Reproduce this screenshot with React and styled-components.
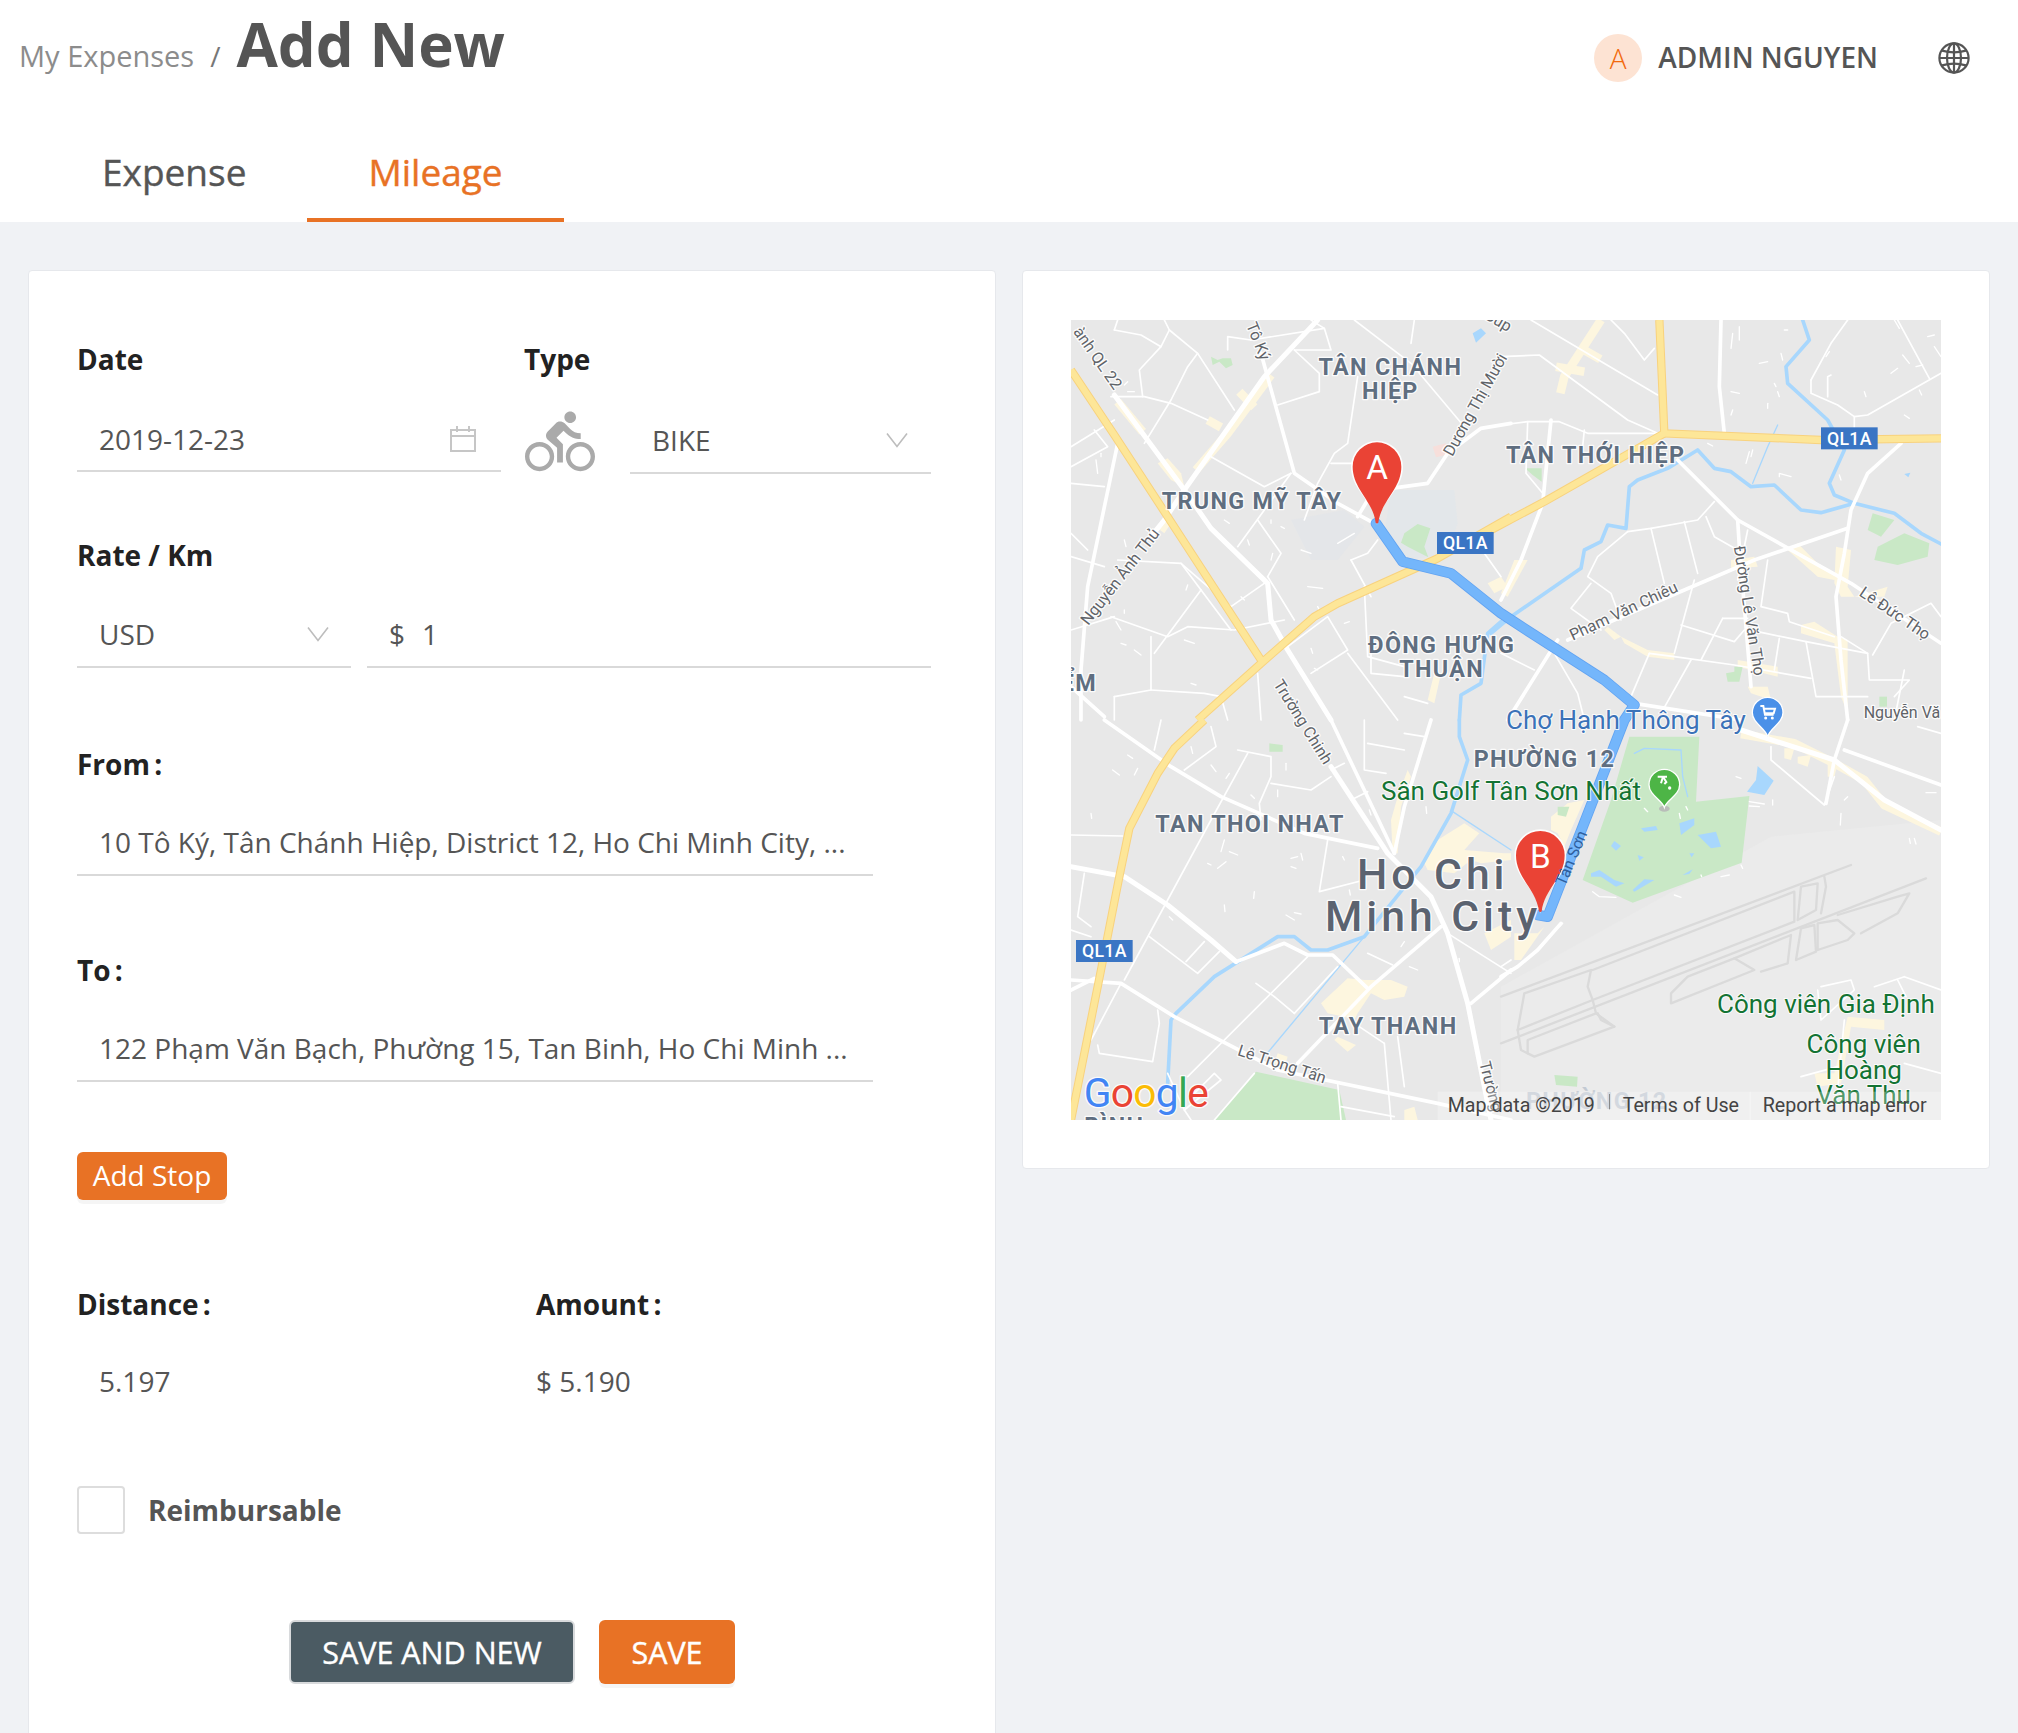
import React from "react";
import styled, { createGlobalStyle } from "styled-components";
import { MdDirectionsBike } from "react-icons/md";

const Global = createGlobalStyle`
  html, body { margin: 0; padding: 0; background: #f0f2f5; }
  * { box-sizing: border-box; }
`;
const Page = styled.div`
  height: 1733px; overflow: hidden; background: #f0f2f5;
  font-family: "Open Sans", "Noto Sans", sans-serif; color: #555;
`;
const Header = styled.header`background: #fff; height: 222px; display: flex; flex-direction: column;`;
const TopRow = styled.div`height: 120px; display: flex; justify-content: space-between; align-items: flex-start; padding: 0 48px 0 19px;`;
const Crumbs = styled.div`display: flex; align-items: baseline; padding-top: 1px;`;
const CrumbLink = styled.span`font-size: 29px; color: #8c8c8c;`;
const CrumbSep = styled.span`font-size: 28px; color: #777; margin: 0 16px;`;
const Title = styled.h1`margin: 0; font-size: 60px; font-weight: 700; color: #555; line-height: 87px;`;
const UserArea = styled.div`display: flex; align-items: center; padding-top: 34px;`;
const Avatar = styled.div`width: 48px; height: 48px; border-radius: 50%; background: #fde3d3; color: #f2690d; font-size: 28px; display: flex; align-items: center; justify-content: center; font-weight: 300;`;
const UserName = styled.div`font-size: 28px; font-weight: 600; margin: 0 60px 0 16px; color: #555; line-height: 46px; padding-bottom: 2px;`;
const Tabs = styled.nav`display: flex; margin-left: 41px; height: 102px;`;
const Tab = styled.div`
  padding: 27px 61px 0; font-size: 37px; line-height: 50px; height: 102px; -webkit-text-stroke: .4px currentColor;
  color: ${p => (p.$active ? "#e87225" : "#555")};
  border-bottom: 4px solid ${p => (p.$active ? "#e87225" : "transparent")};
`;
const Content = styled.main`display: grid; grid-template-columns: 968px 968px; gap: 26px; padding: 48px 28px 0; align-items: start;`;
const Card = styled.section`background: #fff; border: 1px solid #e6e8ec; border-radius: 4px;`;
const FormCard = styled(Card)`height: 1500px; padding: 68px 48px 0;`;
const MapCard = styled(Card)`padding: 48px; padding-top: 49px;`;
const Label = styled.div`font-size: 28px; font-weight: 700; color: #222; line-height: 40px; word-spacing: ${p => (p.$tight ? "-3px" : "0")};`;
const Row = styled.div`display: flex; align-items: flex-end; margin-top: ${p => p.$top || 0}px;`;
const Col = styled.div`width: ${p => p.$w}px; flex: none;`;
const Field = styled.div`
  width: ${p => p.$w}px; height: ${p => p.$h || 72}px; flex: none; display: flex; align-items: center;
  justify-content: ${p => (p.$start ? "flex-start" : "space-between")};
  border-bottom: 2px solid #d9d9d9; padding: ${p => p.$pt || 6}px ${p => p.$pr || 22}px 0 22px; font-size: 28px; color: #555; white-space: nowrap;
  margin-left: ${p => p.$ml || 0}px; margin-bottom: ${p => p.$mb || 0}px;
`;
const Prefix = styled.span`margin-right: 17px;`;
const BikeWrap = styled.div`width: 70px; height: 72px; margin-left: 24px; flex: none; color: #aaa; display: flex; align-items: flex-end; position: relative; top: 5px;`;
const Btn = styled.button`
  font-family: inherit; color: #fff; background: ${p => p.$dark ? "#4b5b63" : "#e87225"};
  border: ${p => p.$dark ? "2px solid #d8dadc" : "0"}; border-radius: 6px; padding: 0;
  box-shadow: ${p => p.$dark ? "none" : "0 4px 0 rgba(0,0,0,.04)"};
`;
const AddStop = styled(Btn)`width: 150px; height: 48px; font-size: 28px; margin-top: 70px; padding-bottom: 2px; display: block;`;
const ValueRow = styled.div`display: flex; margin-top: 37px;`;
const Value = styled.div`font-size: 28px; line-height: 40px; padding-left: ${p => p.$pl || 0}px; color: #555;`;
const CheckRow = styled.div`display: flex; align-items: center; margin-top: 85px;`;
const Check = styled.div`width: 48px; height: 48px; border: 2px solid #ddd; border-radius: 4px; background: #fff;`;
const CheckLabel = styled.div`font-size: 28px; font-weight: 700; color: #555; margin-left: 23px;`;
const Actions = styled.div`display: flex; justify-content: center; gap: 24px; margin-top: 86px;`;
const BigBtn = styled(Btn)`height: 64px; font-size: 30.5px; -webkit-text-stroke: .4px #fff; width: ${p => p.$w}px;`;
const MapBox = styled.div`width: 870px; height: 800px; overflow: hidden; background: #e8e8e8;`;
const MapSvg = styled.svg`display: block; width: 870px; height: 800px;`;
const MapText = styled.text`
  font-family: Roboto, "Noto Sans", sans-serif; paint-order: stroke; stroke-linejoin: round;
  stroke: rgba(255,255,255,.85);
`;
const AreaText = styled(MapText)`font-size: ${p => p.$s || 70}px; font-weight: ${p => p.$wt || 700}; fill: ${p => p.$c || "#5f6e80"}; letter-spacing: ${p => p.$ls || 4}px; stroke-width: 8px;`;
const RoadText = styled(MapText)`font-size: 48px; fill: ${p => p.$c || "#5f6368"}; stroke-width: 8px;`;
const PoiText = styled(MapText)`font-size: 78px; fill: ${p => p.$c || "#137333"}; stroke-width: 6px;`;
const AttrText = styled(MapText)`font-size: 59px; fill: #444; stroke: none;`;
const ShieldText = styled(MapText)`font-size: 53px; font-weight: 500; fill: #fff; stroke: none; letter-spacing: 1px;`;
const PinText = styled(MapText)`font-size: 100px; fill: #fff; stroke: none; text-anchor: middle;`;
const LogoText = styled(MapText)`font-size: 122px; stroke-width: 8px; letter-spacing: -2px;`;

const OFF = { a: [0, 0], b: [1290, 0], c: [0, 1200], d: [1290, 1200] };
const Lines = ({ data, w, color, cap = "round" }) => (
  <g fill="none" stroke={color} strokeWidth={w} strokeLinejoin="round" strokeLinecap={cap}>
    {Object.entries(data).map(([k, list]) => (
      <g key={k} transform={`translate(${OFF[k][0]} ${OFF[k][1]})`}>
        {list.map((pts, i) => <polyline key={i} points={pts} />)}
      </g>
    ))}
  </g>
);
const Polys = ({ data, color }) => (
  <g fill={color}>
    {Object.entries(data).map(([k, list]) => (
      <g key={k} transform={`translate(${OFF[k][0]} ${OFF[k][1]})`}>
        {list.map((pts, i) => <polygon key={i} points={pts} />)}
      </g>
    ))}
  </g>
);

const urban = {
  a: ["260,430 290,415 330,460 340,500 300,480", "270,600 300,610 280,640 260,625", "1250,790 1290,770 1310,800 1270,820", "1070,1140 1090,1060 1110,1060 1090,1150"],
  b: ["690,720 760,710 770,740 690,745", "1005,680 1050,690 1040,800 1060,830 1160,800 1150,830 1020,830 1000,790", "860,690 890,670 960,740 1010,770 1000,780 950,770", "900,915 940,905 1010,950 1040,960 1040,1180 1020,1130 1000,970 900,940", "360,950 440,990 520,1000 520,1020 440,1010 370,970", "320,920 360,950 340,960 310,930", "710,1020 830,1040 830,1070 710,1040", "740,1100 800,1100 810,1140 750,1120", "40,720 80,720 20,830 0,820"],
  c: ["1100,360 1180,310 1225,340 1180,390 1300,400 1320,400 1320,420 1230,430 1200,420 1150,460 1070,450 1060,430", "750,850 830,775 880,780 960,780 1010,800 1000,830 940,840 900,820 860,880 850,900 820,890 770,880", "800,950 855,975 830,995 790,960", "960,300 980,230 1010,150 1020,170 990,260 980,400 965,400", "1240,640 1320,600 1320,650 1260,690", "620,1000 650,1010 640,1040 610,1030", "1000,1170 1030,1160 1040,1200 1000,1200"],
  d: ["980,130 1010,130 1000,170 980,170", "150,290 200,250 250,240 210,330 190,380 170,340 150,330", "40,640 110,640 130,620 60,720 40,720", "940,1060 1000,1060 1040,890 1150,900 1150,930 1050,920 1020,1090 950,1100", "890,110 930,105 920,140 890,130", "850,85 880,85 870,120 850,115"],
};
const urbanLines = {
  a: ["600,165 470,340 375,450", "410,300 450,322", "505,215 550,262", "140,245 215,335"],
  b: ["300,0 190,170 178,220", "165,140 250,155", "240,85 298,118"],
  c: [],
  d: ["720,42 880,70 1000,130 1090,180 1150,255 1320,335"],
};
const parks = {
  a: ["420,110 440,120 455,115 480,115 485,135 465,145 445,125 425,135", "1000,640 1040,612 1078,625 1060,680 1072,712 1010,680 990,668"],
  b: ["72,445 122,445 122,485 95,465", "1115,580 1180,600 1140,650 1100,630", "1130,680 1210,640 1285,670 1280,710 1190,735 1120,720", "675,1060 700,1055 700,1040 725,1040 715,1085 680,1085", "1135,1130 1158,1130 1158,1160 1135,1160"],
  c: ["555,1055 805,1110 825,1200 430,1200", "595,70 635,75 635,95 595,95"],
  d: ["385,50 595,50 585,245 745,228 722,428 395,548 245,480 330,240", "160,1065 230,1070 228,1100 165,1095", "170,260 205,260 195,290 170,285"],
};
const ponds = {
  a: ["1205,40 1230,25 1245,40 1215,68"],
  b: ["1210,462 1228,458 1222,472"],
  d: ["770,138 818,182 790,225 738,215 765,180", "340,363 360,378 345,392 330,378", "590,345 645,335 660,380 630,385", "420,325 465,318 470,330 430,335", "535,310 580,295 580,315 540,345", "410,405 428,412 415,422", "270,460 295,450 340,480 370,490 345,500 300,470 270,470", "395,510 430,478 460,480 400,515", "545,465 575,448 565,462", "565,400 580,400 572,412"],
};
const rivers = {
  a: ["1290,905 1250,940 1230,1090 1170,1125 1165,1200"],
  b: ["905,0 925,60 855,140 860,190 980,300 1030,390 985,490 1000,525 1060,550 1180,580 1260,640 1320,672", "-30,940 30,890 160,800 240,745 250,690 300,665 320,615 375,625 385,500 410,480 500,445 590,390 640,445 690,455 750,500 820,495 900,570 960,578 1060,550"],
  c: ["1165,0 1165,50 1190,120 1140,280 1050,440 880,650 770,690 720,690 670,650 620,650 430,770 315,880 300,900 290,1090"],
  d: [],
};
const riverThin = {
  a: [],
  b: ["830,315 800,380 755,490"],
  c: ["880,650 580,1010", "1145,275 1320,390"],
  d: ["0,190 10,220", "400,100 430,85 540,90 545,170 560,230"],
};
const thin = {
  a: ["130,30 210,45 270,80 295,30", "270,80 205,150 215,230", "295,30 380,100 490,270", "380,100 350,140 300,240 220,370", "120,230 220,230 300,250 410,300", "0,380 130,300", "70,330 110,380 0,440", "0,490 100,500", "540,60 760,25 780,90 670,90", "670,90 745,160 745,215 620,255", "470,90 470,50 540,60", "760,25 720,0", "850,0 1020,130 1180,320", "1020,70 1030,0", "860,170 830,370 790,400 740,490 700,600", "780,430 850,430", "420,410 580,500 660,460", "660,460 500,680", "560,600 630,700 590,770", "590,770 670,900", "140,720 330,730 480,930", "330,730 480,860 580,790", "390,810 250,1000", "120,890 290,950 350,920 490,930 640,900", "240,950 240,1110 130,1130", "0,930 130,890", "840,720 890,700 920,660", "840,720 900,830", "880,800 890,1010 1000,1040", "650,980 770,890 830,990 720,1060", "900,1000 900,1060 1000,1070", "830,1000 980,1200", "560,1060 570,1200", "0,640 50,690", "0,710 100,740", "1000,1130 1070,1150", "240,1110 400,1120 450,1130 470,1200", "130,1200 130,1130", "1240,700 1290,770", "140,0 130,30", "280,0 295,30"],
  b: ["90,0 470,225", "0,110 115,105 380,300 470,340", "330,0 370,40 430,120 460,85", "0,315 80,305 175,305 260,340 470,340", "80,305 75,460 125,520", "250,330 240,430", "380,635 450,625 590,600 640,545", "615,590 640,650 710,690", "380,635 290,710 260,770 330,820 360,900", "270,790 210,865 300,930", "450,625 490,790", "550,605 590,760", "580,780 520,1000", "445,1000 520,1010 700,1035 930,1075", "540,915 700,965 730,930", "665,895 600,1020", "665,895 740,895", "570,1020 480,1180", "445,1000 390,1130", "740,630 710,780", "800,720 780,860 860,880 865,905 1000,950", "770,935 915,965 945,1130 1100,1130", "915,965 1100,1000 1105,1080 1225,1080 1180,1130", "835,955 820,1050", "1115,1005 1170,910 1290,850 1320,890", "1020,950 1100,1000", "930,180 990,70 1040,0", "930,180 930,220 1010,255 1060,290 1100,285 1320,160", "1190,0 1285,175", "1060,290 1060,340", "980,230 980,170 990,165", "160,1000 230,1120 250,1200", "0,1000 100,1050", "1210,1050 1180,1200"],
  c: ["530,100 420,300 160,780", "500,90 600,110 600,170 565,250 570,300", "600,190 720,210 780,170", "420,20 435,80 340,150", "770,360 745,515 880,480", "235,650 380,760 445,695", "345,725 400,665", "710,710 350,1070", "610,830 670,880", "610,830 555,790", "670,880 800,740", "260,870 265,910 245,1025 85,1000 80,975", "890,700 965,735", "1130,640 1320,760", "940,970 960,1200", "980,950 1000,1100", "800,1090 810,1200", "810,1160 970,1190", "550,1060 430,1200", "940,970 850,910", "0,345 155,348", "40,460 20,590 60,620", "0,630 60,650", "150,790 60,960", "290,1060 340,1170 360,1200", "340,1170 450,1080 430,1060 370,1120", "270,0 250,90", "840,240 890,215", "820,130 780,150", "880,0 880,150 945,160", "890,70 1000,90", "1000,40 1060,50"],
  d: ["810,80 810,120 970,255 1000,170", "960,800 1050,780 1060,810 960,900 950,810", "1210,770 1120,800", "1210,770 1320,810", "900,1070 1010,1040", "1030,900 1010,1110", "1210,1030 1320,1060", "1190,780 1215,830", "1320,40 1250,20", "0,740 30,720"],
};
const mid = {
  a: ["570,100 670,460 800,550 910,610", "140,370 50,800 30,1050 30,1200", "1320,310 1230,325 1130,400 1070,490 960,505", "890,540 860,590", "0,1100 100,1190"],
  b: ["660,0 655,200 670,340", "530,420 710,600 1050,790 1320,970", "200,960 760,720 1040,625", "1200,370 1100,460 1050,570 1030,700 1005,830 1020,1020 1040,1200", "710,600 715,680 750,1100", "150,300 125,550 60,720 0,840", "20,1200 170,960", "400,1150 720,1200"],
  c: ["100,0 300,140 450,230 700,340 920,385", "780,0 970,400", "495,725 640,670 710,705 785,705 890,805", "1110,620 900,800 680,1030", "0,780 150,790 310,890 620,1050 1100,1150 1320,1200", "1080,0 1000,260 970,400", "1320,750 1200,850", "0,810 70,775"],
  d: ["1030,90 1320,195", "1040,0 1000,120 975,250", "180,610 110,690 50,740 0,770"],
};
const major = {
  a: ["130,225 340,510 420,625 590,790 600,900 650,990 780,1200", "740,0 580,170 340,510 280,600 240,650"],
  b: [],
  c: ["780,140 950,400 1080,530 1130,640 1190,850 1260,1200", "0,440 160,470 290,555 420,660 495,725"],
  d: ["720,30 1000,120 1150,240 1320,330"],
};
const highway = {
  a: ["0,150 130,345 290,590 570,1020", "380,1200 570,1030 730,890 800,850 1100,715 1320,590"],
  b: ["-30,630 130,545 490,340", "475,0 490,340 960,360 1320,355"],
  c: ["400,0 310,85 260,160 175,325 145,470 90,750 50,950 0,1200"],
  d: [],
};
const runways = {
  d: ["0,830 1050,435", "0,970 1275,475", "50,930 70,820 270,750 260,800 275,840 50,930", "80,1000 100,1010 340,920 285,880 80,960 80,1000", "285,880 275,840 880,605 880,515 275,750", "510,850 760,750 700,715 560,770 510,820 510,850", "700,715 870,645 860,730 780,755", "890,600 900,500 950,490 945,570 890,600", "885,720 900,625 940,615 945,695 885,720", "950,690 950,610 1010,600 1060,640 1040,660 950,690", "960,580 975,500 970,470", "1010,585 1190,530 1225,520 1190,580 1080,640", "290,880 300,900 340,920", "50,930 60,990 80,1000"],
};
const dashes = {
  a: ["160,195 170,185", "170,215 190,215", "75,420 80,460", "90,400 90,410", "160,660 165,680", "135,905 150,930", "340,960 370,970", "710,800 755,805", "800,670 850,640", "690,690 720,700", "510,830 520,840", "600,600 600,610", "630,620 640,625", "530,660 535,675", "460,600 475,610", "150,970 165,975", "160,870 160,880", "350,795 345,810", "190,990 210,1005", "360,1090 375,1095", "740,860 745,870", "820,910 835,905", "720,985 725,1000", "600,720 605,700", "740,1050 730,1045"],
  b: ["695,40 690,85", "715,20 715,60", "775,130 800,125", "690,215 715,220", "820,190 825,200", "830,215 835,230", "840,100 845,120", "800,250 800,265", "695,270 690,285", "1170,160 1190,145", "1205,105 1225,130", "1300,80 1320,110", "1280,50 1300,45", "620,370 635,378", "745,395 735,430", "755,390 750,410", "835,470 835,460 870,470", "1015,465 1020,480", "1090,215 1095,230", "1210,285 1225,295", "985,95 975,110", "850,30 860,30", "1180,0 1195,25", "1245,140 1265,135", "1255,210 1262,225"],
  c: ["60,280 62,295", "170,105 185,115", "125,150 145,165", "190,165 200,145", "360,80 365,100", "420,135 435,155", "475,160 465,175", "540,225 550,235", "620,210 620,230", "645,130 645,150", "450,395 460,360", "475,395 500,405", "410,430 420,435", "440,445 465,425", "660,415 680,410", "660,440 675,445", "690,400 695,420", "550,515 548,535", "460,555 462,575", "645,585 670,600", "670,578 690,582", "815,410 820,420", "835,510 838,525", "295,590 305,600", "895,270 900,285", "1065,260 1067,280", "1000,665 990,680", "1015,740 1040,750", "1165,715 1165,725"],
  d: ["705,170 720,175", "430,265 440,275", "535,280 538,295", "555,260 560,270", "275,515 295,530 345,532", "520,525 540,532", "600,465 602,470", "660,470 685,465", "720,435 725,445", "745,245 790,252", "745,258 775,260", "815,240 815,255", "1020,280 1018,315", "1030,240 1040,230", "1225,355 1228,370", "1240,355 1245,372", "1275,218 1305,218", "175,620 185,610"],
};
const ROUTE = "915,610 995,725 1140,760 1290,880 1390,945 1600,1080 1690,1155 1660,1200 1430,1790 1400,1785";

const Pin = ({ x, y, fill = "#ea4335", letter }) => (
  <g transform={`translate(${x} ${y})`}>
    <path d="M0,3 C-8,-70 -78,-100 -78,-172 A78,78 0 1 1 78,-172 C78,-100 8,-70 0,3Z" fill="#fff" opacity=".9" />
    <path d="M-4,-4 C-12,-70 -73,-105 -73,-172 A73,73 0 1 1 73,-172 C73,-105 12,-70 4,-4 C3,-1 -3,-1 -4,-4Z" fill={fill} />
    <PinText x="0" y="-135">{letter}</PinText>
  </g>
);
const Shield = ({ x, y }) => (
  <g>
    <rect x={x} y={y} width="170" height="66" fill="#3a75c4" />
    <ShieldText x={x + 85} y={y + 52} textAnchor="middle">QL1A</ShieldText>
  </g>
);
const Angled = ({ x, y, r, children, c, $bare }) => (
  <RoadText $c={c} style={$bare ? { stroke: "none" } : undefined} transform={`translate(${x} ${y}) rotate(${r})`}>{children}</RoadText>
);

const CityMap = () => (
  <MapSvg viewBox="0 0 2610 2400">
    <rect x="0" y="0" width="2610" height="2400" fill="#e8e8e8" />
    <polygon points="1290,2000 2100,1550 2610,1500 2610,2400 1290,2400" fill="#ebebeb" />
    <Polys data={urban} color="#fdf6df" />
    <Lines data={urbanLines} w={26} color="#fdf6df" cap="butt" />
    <polygon points="960,510 1150,510 1160,610 1130,700 1010,720 940,640" fill="#e3e7ea" />
    <polygon points="660,600 820,570 880,620 800,720 720,720" fill="#e4e6e9" />
    <Polys data={parks} color="#c9e8c6" />
    <polygon points="1085,380 1125,370 1125,405 1095,412" fill="#f7dfdb" />
    <Polys data={ponds} color="#a8d7fd" />
    <Lines data={riverThin} w={4} color="#a8d7fd" />
    <Lines data={rivers} w={11} color="#a8d7fd" />
    <Lines data={runways} w={7} color="#dadada" />
    <Lines data={dashes} w={4} color="#fff" />
    <Lines data={thin} w={5} color="#fff" />
    <Lines data={mid} w={11} color="#fff" />
    <Lines data={major} w={15} color="#fff" />
    <Lines data={highway} w={25} color="#f8d27e" cap="butt" />
    <Lines data={highway} w={19} color="#fde698" cap="butt" />
    <polyline points={ROUTE} fill="none" stroke="#5a9ff2" strokeWidth="32" strokeLinejoin="round" strokeLinecap="round" opacity=".95" />
    <polyline points={ROUTE} fill="none" stroke="#74b6fb" strokeWidth="27" strokeLinejoin="round" strokeLinecap="round" />

    <AreaText x="958" y="165" textAnchor="middle">TÂN CHÁNH</AreaText>
    <AreaText x="958" y="238" textAnchor="middle">HIỆP</AreaText>
    <AreaText x="272" y="567">TRUNG MỸ TÂY</AreaText>
    <AreaText x="1305" y="430">TÂN THỚI HIỆP</AreaText>
    <AreaText x="1112" y="998" textAnchor="middle">ĐÔNG HƯNG</AreaText>
    <AreaText x="1112" y="1070" textAnchor="middle">THUẬN</AreaText>
    <AreaText x="78" y="1112" textAnchor="end">ỂM</AreaText>
    <AreaText x="253" y="1537">TAN THOI NHAT</AreaText>
    <AreaText x="743" y="2142">TAY THANH</AreaText>
    <AreaText x="1208" y="1340">PHƯỜNG 12</AreaText>
    <AreaText x="1365" y="2368" $c="#c3cad3" style={{ stroke: "none" }}>PHƯỜNG 12</AreaText>
    <AreaText x="40" y="2442">BÌNH</AreaText>

    <Angled x="5" y="35" r="55">ành QL 22</Angled>
    <Angled x="525" y="15" r="68">Tô Ký</Angled>
    <Angled x="1144" y="412" r="-61">Dương Thị Mười</Angled>
    <Angled x="1238" y="-5" r="30">Búp</Angled>
    <Angled x="52" y="918" r="-52">Nguyễn Ảnh Thủ</Angled>
    <Angled x="1988" y="680" r="81">Đường Lê Văn Thọ</Angled>
    <Angled x="1505" y="962" r="-25">Phạm Văn Chiêu</Angled>
    <Angled x="2362" y="825" r="34">Lê Đức Thọ</Angled>
    <RoadText x="2378" y="1195">Nguyễn Vă</RoadText>
    <Angled x="606" y="1092" r="58">Trường Chinh</Angled>
    <Angled x="497" y="2205" r="18">Lê Trọng Tấn</Angled>
    <Angled x="1225" y="2228" r="76">Trường</Angled>

    <PoiText x="1305" y="1228" $c="#3b72b8">Chợ Hạnh Thông Tây</PoiText>
    <PoiText x="930" y="1440">Sân Golf Tân Sơn Nhất</PoiText>
    <PoiText x="1938" y="2080">Công viên Gia Định</PoiText>
    <PoiText x="2378" y="2200" textAnchor="middle">Công viên</PoiText>
    <PoiText x="2378" y="2278" textAnchor="middle">Hoàng</PoiText>
    <PoiText x="2378" y="2352" textAnchor="middle">Văn Thu</PoiText>

    <Shield x={1098} y={636} />
    <Shield x={2250} y={322} />
    <Shield x={15} y={1860} />

    <g transform="translate(2090 1250)">
      <path d="M0,0 C-6,-26 -46,-40 -46,-72 A46,46 0 1 1 46,-72 C46,-40 6,-26 0,0Z" fill="#4a90e8" stroke="#fff" strokeWidth="4" />
      <path d="M-22,-92 h9 l5,26 h26 M-10,-84 h32 l-4,14 h-24" fill="none" stroke="#fff" strokeWidth="6" />
      <circle cx="-6" cy="-56" r="4.5" fill="#fff" />
      <circle cx="14" cy="-56" r="4.5" fill="#fff" />
    </g>
    <g transform="translate(1780 1462)">
      <ellipse cx="0" cy="4" rx="16" ry="9" fill="#b9bdb9" />
      <path d="M0,0 C-6,-22 -46,-36 -46,-68 A46,46 0 1 1 46,-68 C46,-36 6,-22 0,0Z" fill="#4db546" stroke="#fff" strokeWidth="4" />
      <path d="M-20,-92 h28 M-4,-92 l-6,20 M-4,-92 l10,16 l-6,6" fill="none" stroke="#fff" strokeWidth="6" />
      <circle cx="16" cy="-58" r="5" fill="#fff" />
    </g>

    <Pin x={918} y={612} letter="A" />
    <Pin x={1408} y={1778} letter="B" />
    <Angled x="1482" y="1700" r="-67" c="#2f5f9e" $bare>Tân Sơn</Angled>

    <AreaText x="858" y="1708" $s={128} $ls={12} $wt={500} $c="#5b6370">Ho Chi</AreaText>
    <AreaText x="762" y="1833" $s={128} $ls={12} $wt={500} $c="#5b6370">Minh City</AreaText>

    <LogoText x="38" y="2360">
      <tspan fill="#4285f4">G</tspan><tspan fill="#ea4335">o</tspan><tspan fill="#fbbc05">o</tspan><tspan fill="#4285f4">g</tspan><tspan fill="#34a853">l</tspan><tspan fill="#ea4335">e</tspan>
    </LogoText>

    <rect x="1100" y="2315" width="1510" height="85" fill="#fff" opacity=".28" />
    <rect x="2036" y="2315" width="3" height="85" fill="#fff" opacity=".4" />
    <AttrText x="1130" y="2375">Map data ©2019</AttrText>
    <rect x="1614" y="2322" width="3" height="46" fill="#888" />
    <AttrText x="1655" y="2375">Terms of Use</AttrText>
    <AttrText x="2075" y="2375">Report a map error</AttrText>
  </MapSvg>
);

const Chevron = () => (
  <svg width="22" height="16" viewBox="0 0 22 16" fill="none" stroke="#bdbdbd" strokeWidth="1.6"><path d="M1 1.5 L11 14.5 L21 1.5" /></svg>
);
const CalendarIcon = () => (
  <svg width="26" height="26" viewBox="0 0 26 26" fill="none" stroke="#c6c6c6" strokeWidth="2">
    <rect x="1" y="4" width="24" height="21" />
    <path d="M1 10 H25" /><path d="M7 0 V6 M19 0 V6" />
  </svg>
);
const GlobeIcon = () => (
  <svg width="32" height="32" viewBox="0 0 32 32" fill="none" stroke="#555" strokeWidth="2.2">
    <circle cx="16" cy="16" r="14.6" />
    <ellipse cx="16" cy="16" rx="7" ry="14.6" />
    <path d="M16 1.4 V30.6 M1.4 16 H30.6" />
    <path d="M4 8.6 C11 10.6 21 10.6 28 8.6 M4 23.4 C11 21.4 21 21.4 28 23.4" />
  </svg>
);

export default function App() {
  return (
    <Page>
      <Global />
      <Header>
        <TopRow>
          <Crumbs>
            <CrumbLink>My Expenses</CrumbLink>
            <CrumbSep>/</CrumbSep>
            <Title>Add New</Title>
          </Crumbs>
          <UserArea>
            <Avatar>A</Avatar>
            <UserName>ADMIN NGUYEN</UserName>
            <GlobeIcon />
          </UserArea>
        </TopRow>
        <Tabs>
          <Tab>Expense</Tab>
          <Tab $active>Mileage</Tab>
        </Tabs>
      </Header>
      <Content>
        <FormCard>
          <Row>
            <Col $w={447}><Label>Date</Label></Col>
            <Col $w={200}><Label>Type</Label></Col>
          </Row>
          <Row $top={20}>
            <Field $w={424} $pr={25} $h={73} $pt={8}>2019-12-23<CalendarIcon /></Field>
            <BikeWrap><MdDirectionsBike size={70} /></BikeWrap>
            <Field $w={301} $ml={35} $h={73} $pr={23} $mb={-2}>BIKE<Chevron /></Field>
          </Row>
          <Row $top={63}><Label>Rate / Km</Label></Row>
          <Row $top={20}>
            <Field $w={274} $pr={22} $h={73}>USD<Chevron /></Field>
            <Field $w={564} $ml={16} $h={73} $start><Prefix>$</Prefix>1</Field>
          </Row>
          <Row $top={76}><Label $tight>From :</Label></Row>
          <Row $top={19}><Field $w={796} $h={73}>10 Tô Ký, Tân Chánh Hiệp, District 12, Ho Chi Minh City, ...</Field></Row>
          <Row $top={74}><Label $tight>To :</Label></Row>
          <Row $top={20}><Field $w={796}>122 Phạm Văn Bạch, Phường 15, Tan Binh, Ho Chi Minh ...</Field></Row>
          <AddStop>Add Stop</AddStop>
          <Row $top={84}>
            <Col $w={459}><Label $tight>Distance :</Label></Col>
            <Col $w={300}><Label $tight>Amount :</Label></Col>
          </Row>
          <ValueRow>
            <Col $w={459}><Value $pl={22}>5.197</Value></Col>
            <Col $w={300}><Value>$ 5.190</Value></Col>
          </ValueRow>
          <CheckRow>
            <Check />
            <CheckLabel>Reimbursable</CheckLabel>
          </CheckRow>
          <Actions>
            <BigBtn $dark $w={286}>SAVE AND NEW</BigBtn>
            <BigBtn $w={136}>SAVE</BigBtn>
          </Actions>
        </FormCard>
        <MapCard>
          <MapBox><CityMap /></MapBox>
        </MapCard>
      </Content>
    </Page>
  );
}
